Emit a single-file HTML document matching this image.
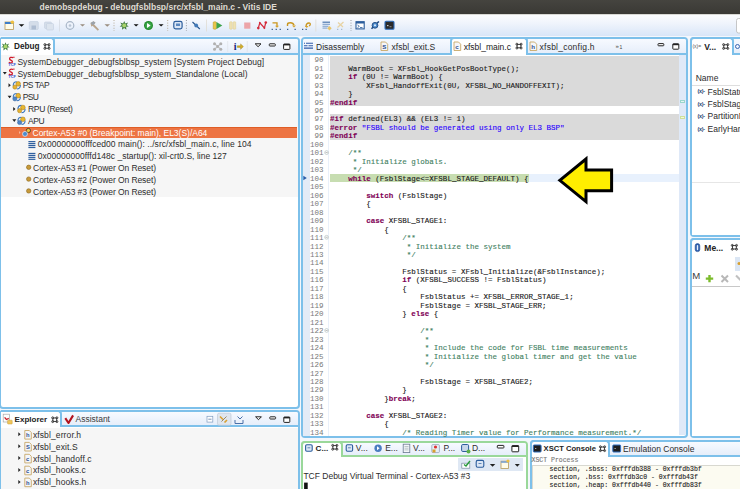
<!DOCTYPE html><html><head><meta charset="utf-8"><style>
*{margin:0;padding:0;box-sizing:border-box}
html,body{width:740px;height:489px;overflow:hidden;background:#f4f7fc;font-family:"Liberation Sans",sans-serif;position:relative}
.a{position:absolute}
#title{left:0;top:0;width:740px;height:13.5px;background:linear-gradient(#45443f,#3a3935);color:#dfdbd2;font-weight:bold;font-size:8.5px;line-height:13px;white-space:nowrap}
#tb{left:0;top:13.5px;width:740px;height:22.5px;background:linear-gradient(#fbfcfe 0%,#f1f5fc 35%,#d9e6f8 100%);border-top:1px solid #d8d8d4}
.t{position:absolute;white-space:nowrap;color:#3c3c3c}
.m{position:absolute;white-space:pre;font-family:"Liberation Mono",monospace;-webkit-text-stroke:0.12px currentColor}
svg{position:absolute;overflow:visible}
</style></head><body>
<div id="title" class="a"><span class="a" style="left:39.5px;top:0.7px">demobspdebug - debugfsblbsp/src/xfsbl_main.c - Vitis IDE</span></div>
<div id="tb" class="a"><svg class="a" style="left:0;top:-1px" width="740" height="24" viewBox="0 13.5 740 24">
<!-- new -->
<rect x="5" y="21.5" width="8.5" height="7.5" fill="#fffbe8" stroke="#b89a58" stroke-width="0.8"/>
<rect x="5" y="21.5" width="8.5" height="2" fill="#3d7cc9"/>
<circle cx="12.3" cy="21.8" r="1.8" fill="#f0c040"/>
<path d="M18.7 23.7h5.6l-2.8 2.6z" fill="#111"/>
<!-- save -->
<rect x="29.3" y="21" width="9" height="8" rx="1" fill="#d4dde9" stroke="#c3cfdf" stroke-width="0.6"/>
<rect x="31.5" y="25" width="4.5" height="4" fill="#aebdd2"/>
<rect x="44.5" y="21.5" width="7" height="6.5" rx="1" fill="#d4dde9" stroke="#c3cfdf" stroke-width="0.6"/>
<rect x="46.5" y="23" width="7" height="6.5" rx="1" fill="#dce4ee" stroke="#c3cfdf" stroke-width="0.6"/>
<line x1="59.5" y1="19" x2="59.5" y2="31" stroke="#d6dbe2" stroke-width="0.8"/>
<!-- history -->
<circle cx="70" cy="25" r="3.8" fill="none" stroke="#a9b7c8" stroke-width="1.2"/>
<circle cx="70" cy="25" r="1.3" fill="#b8c4d3"/>
<path d="M80 23.8h5l-2.5 2.3z" fill="#9a8e80"/>
<!-- hammer -->
<path d="M90.5 22.5l3-1.8 2 1.5-1.5 1.5 5 5.3-1.2 1.2-5.3-5-1.2 1.1z" fill="#b9a58d"/>
<path d="M90.5 22.5l3-1.8 2 1.5-1.5 1.5-1.2 1.1z" fill="#9aa3ad"/>
<path d="M104.5 23.8h5.5l-2.75 2.4z" fill="#9a8e80"/>
<line x1="114" y1="19.5" x2="114" y2="30.5" stroke="#b2a58e" stroke-width="0.9" stroke-dasharray="1 1.6"/>
<!-- debug -->
<g transform="translate(124.2 25)"><path d="M0-4.6L1.1-1.9 3.9-3.1 2.4-0.6 4.6 0.9 1.9 1.2 2.2 4.2 0 2.4-2.2 4.2-1.9 1.2-4.6 0.9-2.4-0.6-3.9-3.1-1.1-1.9z" fill="#3f7a3e"/><circle r="2" fill="#a7d46b"/></g>
<path d="M133.6 23.7h5l-2.5 2.4z" fill="#111"/>
<!-- run -->
<circle cx="148.5" cy="25" r="4.5" fill="#238a2a"/><circle cx="148.5" cy="25" r="3.3" fill="#3aa64a"/>
<path d="M147 22.6l3.6 2.4-3.6 2.4z" fill="#fff"/>
<path d="M158.6 23.7h5l-2.5 2.4z" fill="#111"/>
<line x1="167.7" y1="19.5" x2="167.7" y2="30.5" stroke="#b2a58e" stroke-width="0.9" stroke-dasharray="1 1.6"/>
<!-- blue monitor -->
<rect x="173.8" y="20.9" width="8.3" height="7.5" rx="1.8" fill="#dbe6f5" stroke="#2b5d9c" stroke-width="1.2"/>
<rect x="176" y="23" width="4" height="2.5" fill="#5a87c0"/>
<line x1="186.4" y1="19.5" x2="186.4" y2="30.5" stroke="#8c8f94" stroke-width="0.9" stroke-dasharray="1 1.6"/>
<path d="M192.5 21.5l7.3 7" stroke="#26558e" stroke-width="1.1"/><circle cx="196.2" cy="25" r="1.9" fill="#4179b8"/>
<line x1="206.5" y1="19" x2="206.5" y2="31" stroke="#e0dcd3" stroke-width="0.8"/>
<!-- resume -->
<rect x="213.2" y="21.3" width="3.2" height="7.4" rx="0.8" fill="#e8c64a" stroke="#b99522" stroke-width="0.5"/>
<path d="M216.5 21.5l5.8 3.5-5.8 3.5z" fill="#3ba34b"/>
<!-- suspend -->
<rect x="229.6" y="21.3" width="2.6" height="7.4" rx="0.6" fill="#efe2b3" stroke="#dccb8c" stroke-width="0.5"/>
<rect x="233.1" y="21.3" width="2.6" height="7.4" rx="0.6" fill="#efe2b3" stroke="#dccb8c" stroke-width="0.5"/>
<rect x="244.2" y="22" width="6.2" height="6.2" fill="#eca4a8"/>
<!-- disconnect -->
<path d="M258.3 27.6L259.8 22.3 264.4 27.4 265.8 22" stroke="#d42a3a" stroke-width="1.2" fill="none"/><circle cx="258.3" cy="27.6" r="1.3" fill="#d42a3a"/><circle cx="265.8" cy="22" r="1.3" fill="#d42a3a"/><circle cx="259.8" cy="22.3" r="0.9" fill="#d42a3a"/><circle cx="264.4" cy="27.4" r="0.9" fill="#d42a3a"/>
<!-- step into -->
<path d="M272.5 22.3h4.5v3.5" stroke="#c9951e" stroke-width="1.3" fill="none"/><path d="M275 25.3h4l-2 2z" fill="#d8a32a"/>
<rect x="271.6" y="28.3" width="1.3" height="1.1" fill="#2a4d80"/><rect x="275.6" y="28.3" width="1.3" height="1.1" fill="#2a4d80"/><rect x="279.6" y="28.3" width="1.3" height="1.1" fill="#2a4d80"/>
<!-- step over -->
<path d="M287.5 25.5v-1.5c0-2 5.5-2.8 6.5 0.8" stroke="#c9951e" stroke-width="1.4" fill="none"/><path d="M292 25h4l-2 2z" fill="#d8a32a"/>
<rect x="287" y="28.3" width="1.3" height="1.1" fill="#2a4d80"/><rect x="294.5" y="28.3" width="1.3" height="1.1" fill="#2a4d80"/>
<!-- step return -->
<path d="M306 26.5c0-3 1-4 3-4s1.5 2.5 0 3" stroke="#c9951e" stroke-width="1.3" fill="none"/><path d="M305 25.5h3.5l-1.7 2z" fill="#d8a32a"/>
<rect x="302" y="28.3" width="1.3" height="1.1" fill="#2a4d80"/><rect x="305.5" y="28.3" width="1.3" height="1.1" fill="#2a4d80"/>
<line x1="315.8" y1="19" x2="315.8" y2="31" stroke="#e0dcd3" stroke-width="0.8"/>
<!-- list icon -->
<rect x="322.5" y="21" width="7.5" height="1.6" fill="#6d8fbd"/><rect x="322.5" y="23.3" width="7.5" height="1.2" fill="#8fabd0"/><rect x="322.5" y="25.2" width="6" height="1.2" fill="#8fabd0"/><rect x="322.5" y="27" width="5" height="1.2" fill="#8fabd0"/>
<path d="M329.5 25.5l2.2 2.2-2.2 2.2-2.2-2.2z" fill="#e8c46a"/>
<!-- pale -->
<path d="M337.5 27l6-5.5M338 22l5 4.5" stroke="#e7d3a4" stroke-width="1.3"/><rect x="337" y="28.3" width="1.3" height="1.1" fill="#a4b3c8"/><rect x="341" y="28.3" width="1.3" height="1.1" fill="#a4b3c8"/>
<line x1="351" y1="19.5" x2="351" y2="30.5" stroke="#8c8f94" stroke-width="0.9" stroke-dasharray="1 1.6"/>
<!-- console -->
<rect x="356" y="21.2" width="8.2" height="7.2" fill="#fff" stroke="#2b5d9c" stroke-width="1.1"/><rect x="356" y="21.2" width="8.2" height="1.8" fill="#2b5d9c"/>
<path d="M357.5 24.5l1.8 1.3-1.8 1.3M360 27h2.5" stroke="#2b5d9c" stroke-width="0.8" fill="none"/>
<!-- link -->
<path d="M371.5 28.3l2-2M377 22.6l2-1.6" stroke="#1f4a82" stroke-width="1.6"/><circle cx="375" cy="24.8" r="2.9" fill="#4a88c9" stroke="#1f4a82" stroke-width="0.9"/><circle cx="375" cy="24.8" r="1.1" fill="#dceaf8"/>
<!-- dark terminal -->
<rect x="385" y="20.8" width="9" height="8" rx="1" fill="#2a2a2a" stroke="#2f6fc0" stroke-width="1.1"/>
<rect x="387" y="24.5" width="1.5" height="1.2" fill="#c9c9c9"/><rect x="389.5" y="25.8" width="2" height="0.9" fill="#9a9a9a"/>
<!-- quick access -->
<rect x="736.5" y="18" width="10" height="14.5" rx="2" fill="#fff" stroke="#b9b9b9" stroke-width="0.8"/>
</svg></div>
<div class="a" style="left:-1px;top:37px;width:301.00px;height:372.00px;border:2px solid #7dc0ea;border-radius:4px;background:#fff;overflow:hidden"><div class="a" style="left:0;top:0;right:0;height:16px;background:linear-gradient(#f7faff,#e6eefa);border-bottom:2px solid #7dc0ea"></div></div>
<div class="a" style="left:-1px;top:410px;width:301.00px;height:90.00px;border:2px solid #7dc0ea;border-radius:4px;background:#fff;overflow:hidden"><div class="a" style="left:0;top:0;right:0;height:15px;background:linear-gradient(#f7faff,#e6eefa);border-bottom:2px solid #7dc0ea"></div></div>
<div class="a" style="left:301px;top:37px;width:387.00px;height:401.00px;border:2px solid #7dc0ea;border-radius:4px;background:#fff;overflow:hidden"><div class="a" style="left:0;top:0;right:0;height:16px;background:linear-gradient(#f7faff,#e6eefa);border-bottom:2px solid #7dc0ea"></div></div>
<div class="a" style="left:690px;top:37px;width:70.00px;height:200.00px;border:2px solid #7dc0ea;border-radius:4px;background:#fff;overflow:hidden"><div class="a" style="left:0;top:0;right:0;height:16px;background:linear-gradient(#f7faff,#e6eefa);border-bottom:2px solid #7dc0ea"></div></div>
<div class="a" style="left:690px;top:238px;width:70.00px;height:200.00px;border:2px solid #7dc0ea;border-radius:4px;background:#fff;overflow:hidden"><div class="a" style="left:0;top:0;right:0;height:16px;background:linear-gradient(#f7faff,#e6eefa);border-bottom:2px solid #7dc0ea"></div></div>
<div class="a" style="left:301px;top:441px;width:227.00px;height:59.00px;border:2px solid #9ad89a;border-radius:4px;background:#fff;overflow:hidden"><div class="a" style="left:0;top:0;right:0;height:14px;background:linear-gradient(#f7faff,#e6eefa);border-bottom:2px solid #9ad89a"></div></div>
<div class="a" style="left:530px;top:440px;width:230.00px;height:60.00px;border:2px solid #7dc0ea;border-radius:4px;background:#fff;overflow:hidden"><div class="a" style="left:0;top:0;right:0;height:14.6px;background:linear-gradient(#f7faff,#e6eefa);border-bottom:2px solid #7dc0ea"></div></div>
<div class="a" style="left:1px;top:37px;width:54.00px;height:18.00px;background:#fff;border-right:2px solid #7dc0ea;border-top:2px solid #7dc0ea;border-radius:0 4px 0 0"></div>
<svg style="left:0;top:0" width="740" height="489">
<g transform="translate(5.5 46.5)"><path d="M0-4.3L1-1.8 3.6-2.9 2.2-0.6 4.3 0.8 1.8 1.1 2.1 3.9 0 2.2-2.1 3.9-1.8 1.1-4.3 0.8-2.2-0.6-3.6-2.9-1-1.8z" fill="#3f7a3e"/><circle r="1.9" fill="#a7d46b"/></g>
<g fill="none" stroke="#333" stroke-width="0.9"><rect x="45.10" y="44.80" width="3.8" height="3.4"/><circle cx="44.90" cy="44.60" r="1"/><circle cx="49.10" cy="44.60" r="1"/><circle cx="44.90" cy="48.40" r="1"/><circle cx="49.10" cy="48.40" r="1"/></g>
<path d="M214.5 43.8L220.8 49.2M220.8 43.8L214.5 49.2" stroke="#c4c4c4" stroke-width="1.2"/><g fill="#b0b0b0"><circle cx="214.5" cy="43.8" r="1.5"/><circle cx="220.8" cy="43.8" r="1.5"/><circle cx="217.65" cy="46.5" r="1.4"/><circle cx="214.5" cy="49.2" r="1.5"/><circle cx="220.8" cy="49.2" r="1.5"/></g>
<line x1="227.7" y1="41" x2="227.7" y2="52" stroke="#dfe3e8" stroke-width="0.8"/>
<text x="233.8" y="50.3" font-family="Liberation Serif" font-weight="bold" font-size="10" fill="#16207a">i</text>
<path d="M237.3 45.8h3.3v-1.9l2.8 2.7-2.8 2.7v-1.9h-3.3z" fill="#d4b02a" stroke="#9a7a10" stroke-width="0.4"/>
<line x1="247.3" y1="41" x2="247.3" y2="52" stroke="#dfe3e8" stroke-width="0.8"/>
<path d="M255.2 43.8h5.8l-2.9 2.9z" fill="#fff" stroke="#222" stroke-width="1"/>
<rect x="269.3" y="43.8" width="6" height="2.2" rx="0.6" fill="#fff" stroke="#222" stroke-width="1"/>
<rect x="283.6" y="44" width="6.3" height="5.4" rx="0.6" fill="#fff" stroke="#222" stroke-width="1"/>
<rect x="283.6" y="44" width="6.3" height="1.4" fill="#222"/>
</svg>
<span class="t" style="left:14px;top:42.96px;font-size:8.2px;line-height:8.2px;color:#222;font-weight:bold;">Debug</span>
<div class="a" style="left:1px;top:55px;width:297px;height:142.3px;background:#f6f6f6"></div>
<div class="a" style="left:1px;top:126.8px;width:296px;height:11.2px;background:#ed7443;border-top:0.9px solid #df5d25"></div>
<span class="t" style="left:17.4px;top:57.70px;font-size:8.5px;line-height:8.5px;color:#2c2c2c;letter-spacing:0.046px;">SystemDebugger_debugfsblbsp_system [System Project Debug]</span>
<span class="t" style="left:17.4px;top:69.52px;font-size:8.5px;line-height:8.5px;color:#2c2c2c;letter-spacing:0.029px;">SystemDebugger_debugfsblbsp_system_Standalone (Local)</span>
<span class="t" style="left:22.7px;top:81.34px;font-size:8.5px;line-height:8.5px;color:#2c2c2c;letter-spacing:-0.5px;">PS TAP</span>
<span class="t" style="left:22.7px;top:93.16px;font-size:8.5px;line-height:8.5px;color:#2c2c2c;letter-spacing:-0.6px;">PSU</span>
<span class="t" style="left:28px;top:104.98px;font-size:8.5px;line-height:8.5px;color:#2c2c2c;letter-spacing:-0.33px;">RPU (Reset)</span>
<span class="t" style="left:28px;top:116.80px;font-size:8.5px;line-height:8.5px;color:#2c2c2c;letter-spacing:-0.45px;">APU</span>
<span class="t" style="left:32.5px;top:128.62px;font-size:8.5px;line-height:8.5px;color:#fff;letter-spacing:-0.01px;">Cortex-A53 #0 (Breakpoint: main), EL3(S)/A64</span>
<span class="t" style="left:37.8px;top:140.44px;font-size:8.5px;line-height:8.5px;color:#2c2c2c;letter-spacing:0.06px;">0x00000000fffced00 main(): ../src/xfsbl_main.c, line 104</span>
<span class="t" style="left:37.8px;top:152.26px;font-size:8.5px;line-height:8.5px;color:#2c2c2c;letter-spacing:0.026px;">0x00000000fffd148c _startup(): xil-crt0.S, line 127</span>
<span class="t" style="left:33.1px;top:164.08px;font-size:8.5px;line-height:8.5px;color:#2c2c2c;letter-spacing:-0.077px;">Cortex-A53 #1 (Power On Reset)</span>
<span class="t" style="left:33.1px;top:175.90px;font-size:8.5px;line-height:8.5px;color:#2c2c2c;letter-spacing:-0.077px;">Cortex-A53 #2 (Power On Reset)</span>
<span class="t" style="left:33.1px;top:187.72px;font-size:8.5px;line-height:8.5px;color:#2c2c2c;letter-spacing:-0.077px;">Cortex-A53 #3 (Power On Reset)</span>
<svg style="left:0;top:0" width="740" height="489"><path d="M13.2 57.7c-1.8-0.9-4-0.2-3.6 1.3s3.2 1.4 2.8 2.9-2.3 1.2-3.6 0.4" stroke="#cf1b2b" stroke-width="1.3" fill="none"/><rect x="13.3" y="56.7" width="1.2" height="1.2" fill="#cf1b2b"/><text x="8.3" y="65.7" font-family="Liberation Sans" font-weight="bold" font-size="4.2" textLength="7.6" lengthAdjust="spacingAndGlyphs" fill="#2f4fd0">TCF</text><path d="M2.8 72.02h4l-2 2.6z" fill="#222"/><path d="M13.2 69.52c-1.8-0.9-4-0.2-3.6 1.3s3.2 1.4 2.8 2.9-2.3 1.2-3.6 0.4" stroke="#cf1b2b" stroke-width="1.3" fill="none"/><rect x="13.3" y="68.52" width="1.2" height="1.2" fill="#cf1b2b"/><text x="8.3" y="77.52" font-family="Liberation Sans" font-weight="bold" font-size="4.2" textLength="7.6" lengthAdjust="spacingAndGlyphs" fill="#2f4fd0">TCF</text><path d="M8.5 83.34v4l2.3-2z" fill="#222"/><path d="M13.200000000000001 85.64c0-2.6 1.6-3.9 3.6-3.9M20.4 85.04c0 2.6-1.6 3.9-3.6 3.9" stroke="#3b78c0" stroke-width="1.1" fill="none"/><circle cx="18.200000000000003" cy="83.84" r="2.3" fill="#e8b830" stroke="#a07010" stroke-width="0.5"/><circle cx="14.9" cy="87.04" r="2.1" fill="#e6b432" stroke="#a07010" stroke-width="0.5"/><path d="M7.6 95.66h4l-2 2.6z" fill="#222"/><path d="M13.200000000000001 97.46c0-2.6 1.6-3.9 3.6-3.9M20.4 96.86c0 2.6-1.6 3.9-3.6 3.9" stroke="#3b78c0" stroke-width="1.1" fill="none"/><circle cx="18.200000000000003" cy="95.66" r="2.3" fill="#e8b830" stroke="#a07010" stroke-width="0.5"/><circle cx="14.9" cy="98.86" r="2.1" fill="#4f86c6" stroke="#2a5a98" stroke-width="0.5"/><path d="M13.2 106.97999999999999v4l2.3-2z" fill="#222"/><path d="M17.9 109.27999999999999c0-2.6 1.6-3.9 3.6-3.9M25.1 108.67999999999999c0 2.6-1.6 3.9-3.6 3.9" stroke="#3b78c0" stroke-width="1.1" fill="none"/><circle cx="22.9" cy="107.47999999999999" r="2.3" fill="#e8b830" stroke="#a07010" stroke-width="0.5"/><circle cx="19.6" cy="110.67999999999999" r="2.1" fill="#e6b432" stroke="#a07010" stroke-width="0.5"/><path d="M12.3 119.3h4l-2 2.6z" fill="#222"/><path d="M17.9 121.1c0-2.6 1.6-3.9 3.6-3.9M25.1 120.5c0 2.6-1.6 3.9-3.6 3.9" stroke="#3b78c0" stroke-width="1.1" fill="none"/><circle cx="22.9" cy="119.3" r="2.3" fill="#e8b830" stroke="#a07010" stroke-width="0.5"/><circle cx="19.6" cy="122.5" r="2.1" fill="#4f86c6" stroke="#2a5a98" stroke-width="0.5"/><path d="M19 131.12v3l1.6-1.5z" fill="#f6b59a"/><circle cx="28.4" cy="130.52" r="2.1" fill="#f0c840" stroke="#3a3020" stroke-width="0.8"/><circle cx="25.0" cy="133.92000000000002" r="2.5" fill="#4d8ccc" stroke="#fff" stroke-width="0.6"/><rect x="28.4" y="141.04" width="7" height="1.2" fill="#2f5f9f"/><rect x="28.4" y="142.99" width="7" height="1.2" fill="#2f5f9f"/><rect x="28.4" y="144.94" width="7" height="1.2" fill="#2f5f9f"/><rect x="28.4" y="146.89" width="7" height="1.2" fill="#2f5f9f"/><rect x="28.4" y="152.86" width="7" height="1.2" fill="#2f5f9f"/><rect x="28.4" y="154.81" width="7" height="1.2" fill="#2f5f9f"/><rect x="28.4" y="156.76" width="7" height="1.2" fill="#2f5f9f"/><rect x="28.4" y="158.71" width="7" height="1.2" fill="#2f5f9f"/><circle cx="28.7" cy="167.27999999999997" r="2.2" fill="#c79a3a" stroke="#8a6418" stroke-width="0.6"/><circle cx="28.7" cy="179.1" r="2.2" fill="#c79a3a" stroke="#8a6418" stroke-width="0.6"/><circle cx="28.7" cy="190.92" r="2.2" fill="#c79a3a" stroke="#8a6418" stroke-width="0.6"/></svg>
<div class="a" style="left:1px;top:427.5px;width:297px;height:62px;background:#f6f6f6"></div>
<div class="a" style="left:1px;top:410px;width:61.00px;height:17.00px;background:#fff;border-right:2px solid #7dc0ea;border-top:2px solid #7dc0ea;border-radius:0 4px 0 0"></div>
<svg style="left:0;top:0" width="740" height="489"><rect x="3.2" y="414.2" width="6.2" height="7.8" fill="#fff" stroke="#a8a8a8" stroke-width="0.7"/><path d="M4.6 417.3l1.8 2.2 2.4-1.2" stroke="#c8202a" stroke-width="1.3" fill="none"/><rect x="7.6" y="420.2" width="4.6" height="3.8" rx="0.6" fill="#f2c75a" stroke="#c49a38" stroke-width="0.5"/><g fill="none" stroke="#333" stroke-width="0.9"><rect x="52.90" y="418.00" width="3.8" height="3.4"/><circle cx="52.70" cy="417.80" r="1"/><circle cx="56.90" cy="417.80" r="1"/><circle cx="52.70" cy="421.60" r="1"/><circle cx="56.90" cy="421.60" r="1"/></g><path d="M65.3 418.2l3.2 4.8 4.6-7.6" stroke="#b3141f" stroke-width="2.1" fill="none" stroke-linejoin="round"/><rect x="207" y="416.3" width="5.8" height="5.8" fill="#fff" stroke="#7f9cc0" stroke-width="0.7"/><path d="M208.3 419.2h3.2" stroke="#5a7aa8" stroke-width="0.8"/><rect x="217.5" y="413.2" width="13.5" height="12" rx="1.5" fill="#dfe6ef" stroke="#b9c4d2" stroke-width="0.6"/><path d="M220 416.5l3 3M227 420l-2.5 2.5" stroke="#d8a030" stroke-width="1.6"/><path d="M221.5 421.5l5-5" stroke="#8a7040" stroke-width="0.8"/><path d="M235 420v3.5h8v-3.5" stroke="#4a70a8" stroke-width="1" fill="none"/><path d="M237.5 416.5l2.5 2.5 2.5-2.5" stroke="#4a70a8" stroke-width="1" fill="none"/><path d="M255.6 416.8h5.8l-2.9 2.9z" fill="#fff" stroke="#222" stroke-width="1"/><rect x="269.8" y="416.8" width="5.8" height="2.2" rx="0.6" fill="#fff" stroke="#222" stroke-width="1"/><rect x="283.8" y="417" width="6" height="5.4" rx="0.6" fill="#fff" stroke="#222" stroke-width="1"/><rect x="283.8" y="417" width="6" height="1.4" fill="#222"/></svg>
<span class="t" style="left:14.6px;top:415.73px;font-size:8px;line-height:8px;color:#222;font-weight:bold;">Explorer</span>
<span class="t" style="left:75.5px;top:415.30px;font-size:8.5px;line-height:8.5px;color:#3c3c3c;">Assistant</span>
<span class="t" style="left:32.9px;top:430.70px;font-size:8.5px;line-height:8.5px;color:#2c2c2c;letter-spacing:0.12px;">xfsbl_error.h</span>
<span class="t" style="left:32.9px;top:442.60px;font-size:8.5px;line-height:8.5px;color:#2c2c2c;letter-spacing:0.12px;">xfsbl_exit.S</span>
<span class="t" style="left:32.9px;top:454.50px;font-size:8.5px;line-height:8.5px;color:#2c2c2c;letter-spacing:0.12px;">xfsbl_handoff.c</span>
<span class="t" style="left:32.9px;top:466.40px;font-size:8.5px;line-height:8.5px;color:#2c2c2c;letter-spacing:0.12px;">xfsbl_hooks.c</span>
<span class="t" style="left:32.9px;top:478.30px;font-size:8.5px;line-height:8.5px;color:#2c2c2c;letter-spacing:0.12px;">xfsbl_hooks.h</span>
<svg style="left:0;top:0" width="740" height="489"><path d="M18.3 432.3v4l2.3-2z" fill="#222"/><path d="M24.8 430.5h4.5l2 2v6.6h-6.5z" fill="#f4f6fa" stroke="#c8a868" stroke-width="0.9"/><text x="25.9" y="436.90000000000003" font-size="5.8" font-family="Liberation Sans" font-weight="bold" fill="#2a4f8f">h</text><path d="M18.3 444.2v4l2.3-2z" fill="#222"/><path d="M24.8 442.4h4.5l2 2v6.6h-6.5z" fill="#f4f6fa" stroke="#c8a868" stroke-width="0.9"/><text x="25.9" y="448.8" font-size="5.8" font-family="Liberation Sans" font-weight="bold" fill="#2a4f8f">S</text><path d="M18.3 456.1v4l2.3-2z" fill="#222"/><path d="M24.8 454.3h4.5l2 2v6.6h-6.5z" fill="#f4f6fa" stroke="#c8a868" stroke-width="0.9"/><text x="25.9" y="460.70000000000005" font-size="5.8" font-family="Liberation Sans" font-weight="bold" fill="#2a4f8f">c</text><path d="M18.3 468.0v4l2.3-2z" fill="#222"/><path d="M24.8 466.2h4.5l2 2v6.6h-6.5z" fill="#f4f6fa" stroke="#c8a868" stroke-width="0.9"/><text x="25.9" y="472.6" font-size="5.8" font-family="Liberation Sans" font-weight="bold" fill="#2a4f8f">c</text><path d="M18.3 479.90000000000003v4l2.3-2z" fill="#222"/><path d="M24.8 478.1h4.5l2 2v6.6h-6.5z" fill="#f4f6fa" stroke="#c8a868" stroke-width="0.9"/><text x="25.9" y="484.50000000000006" font-size="5.8" font-family="Liberation Sans" font-weight="bold" fill="#2a4f8f">h</text></svg>
<div class="a" style="left:450px;top:37px;width:78.00px;height:18.00px;background:#fff;border-left:2px solid #7dc0ea;border-right:2px solid #7dc0ea;border-top:2px solid #7dc0ea;border-radius:4px 4px 0 0"></div>
<div class="a" style="left:303px;top:55px;width:7.2px;height:381px;background:#e3ebf7"></div>
<div class="a" style="left:328.2px;top:54.8px;width:1px;height:381.6px;background:#e9f0fa"></div>
<div class="a" style="left:678.6px;top:55px;width:7.4px;height:379.6px;background:#dfe9f8"></div>
<div class="a" style="left:330px;top:55.9px;width:348.6px;height:50.12px;background:#dadada"></div>
<div class="a" style="left:330.0px;top:114.49px;width:348.60px;height:25.41px;background:#dadada"></div>
<div class="a" style="left:330.0px;top:173.78px;width:348.60px;height:8.47px;background:#e8f1fd"></div>
<div class="a" style="left:330.0px;top:173.78px;width:199.20px;height:8.47px;background:#c7ddb1"></div>
<div class="m" style="left:330.1px;top:56.20px;font-size:7.53px;line-height:8.47px;color:#1a1a1a">
<span style="color:#1a1a1a;">    WarmBoot = XFsbl_HookGetPosBootType();</span>
<span style="color:#1a1a1a;">    </span><span style="color:#7f0055;font-weight:bold;">if</span><span style="color:#1a1a1a;"> (0U != WarmBoot) {</span>
<span style="color:#1a1a1a;">        XFsbl_HandoffExit(0U, XFSBL_NO_HANDOFFEXIT);</span>
<span style="color:#1a1a1a;">    }</span>
<span style="color:#7f0055;font-weight:bold;">#endif</span>

<span style="color:#7f0055;font-weight:bold;">#if</span><span style="color:#1a1a1a;"> defined(EL3) &amp;&amp; (EL3 != 1)</span>
<span style="color:#7f0055;font-weight:bold;">#error</span><span style="color:#1a1a1a;"> </span><span style="color:#2a00ff;">&quot;FSBL should be generated using only EL3 BSP&quot;</span>
<span style="color:#7f0055;font-weight:bold;">#endif</span>

<span style="color:#3f7f5f;">    /**</span>
<span style="color:#3f7f5f;">     * Initialize globals.</span>
<span style="color:#3f7f5f;">     */</span>
<span style="color:#1a1a1a;">    </span><span style="color:#7f0055;font-weight:bold;">while</span><span style="color:#1a1a1a;"> (FsblStage&lt;=XFSBL_STAGE_DEFAULT) {</span>

<span style="color:#1a1a1a;">        </span><span style="color:#7f0055;font-weight:bold;">switch</span><span style="color:#1a1a1a;"> (FsblStage)</span>
<span style="color:#1a1a1a;">        {</span>

<span style="color:#1a1a1a;">        </span><span style="color:#7f0055;font-weight:bold;">case</span><span style="color:#1a1a1a;"> XFSBL_STAGE1:</span>
<span style="color:#1a1a1a;">            {</span>
<span style="color:#3f7f5f;">                /**</span>
<span style="color:#3f7f5f;">                 * Initialize the system</span>
<span style="color:#3f7f5f;">                 */</span>

<span style="color:#1a1a1a;">                FsblStatus = XFsbl_Initialize(&amp;FsblInstance);</span>
<span style="color:#1a1a1a;">                </span><span style="color:#7f0055;font-weight:bold;">if</span><span style="color:#1a1a1a;"> (XFSBL_SUCCESS != FsblStatus)</span>
<span style="color:#1a1a1a;">                {</span>
<span style="color:#1a1a1a;">                    FsblStatus += XFSBL_ERROR_STAGE_1;</span>
<span style="color:#1a1a1a;">                    FsblStage = XFSBL_STAGE_ERR;</span>
<span style="color:#1a1a1a;">                } </span><span style="color:#7f0055;font-weight:bold;">else</span><span style="color:#1a1a1a;"> {</span>

<span style="color:#3f7f5f;">                    /**</span>
<span style="color:#3f7f5f;">                     *</span>
<span style="color:#3f7f5f;">                     * Include the code for FSBL time measurements</span>
<span style="color:#3f7f5f;">                     * Initialize the global timer and get the value</span>
<span style="color:#3f7f5f;">                     */</span>

<span style="color:#1a1a1a;">                    FsblStage = XFSBL_STAGE2;</span>
<span style="color:#1a1a1a;">                }</span>
<span style="color:#1a1a1a;">            }</span><span style="color:#7f0055;font-weight:bold;">break</span><span style="color:#1a1a1a;">;</span>

<span style="color:#1a1a1a;">        </span><span style="color:#7f0055;font-weight:bold;">case</span><span style="color:#1a1a1a;"> XFSBL_STAGE2:</span>
<span style="color:#1a1a1a;">            {</span>
<span style="color:#3f7f5f;">                /* Reading Timer value for Performance measurement.*/</span></div>
<div class="m" style="left:307.6px;top:56.20px;width:16px;text-align:right;-webkit-text-stroke:0;font-size:7.53px;line-height:8.47px;color:#787878">90
91
92
93
94
95
96
97
98
99
100
101
102
103
104
105
106
107
108
109
110
111
112
113
114
115
116
117
118
119
120
121
122
123
124
125
126
127
128
129
130
131
132
133
134</div>
<div class="a" style="left:679.8px;top:100px;width:5px;height:2.6px;background:#e4f6f3;border:0.7px solid #9ad6cc"></div>
<div class="a" style="left:679.8px;top:116.3px;width:5px;height:2.6px;background:#f2f8dc;border:0.7px solid #cfe09a"></div>
<svg style="left:0;top:0" width="740" height="489"><circle cx="326.6" cy="152.57" r="1.9" fill="#fff" stroke="#9aa" stroke-width="0.5"/><path d="M325.5 152.57h2.2" stroke="#777" stroke-width="0.5"/><circle cx="326.6" cy="237.27" r="1.9" fill="#fff" stroke="#9aa" stroke-width="0.5"/><path d="M325.5 237.27h2.2" stroke="#777" stroke-width="0.5"/><circle cx="326.6" cy="330.44" r="1.9" fill="#fff" stroke="#9aa" stroke-width="0.5"/><path d="M325.5 330.44h2.2" stroke="#777" stroke-width="0.5"/><path d="M303.3 175.78l3.5 2.2-3.5 2.2z" fill="#2a5ca8"/></svg>
<svg style="left:0;top:0" width="740" height="489"><path d="M306 43.3h7M304 43.3h1M304 45.7h3.5M308.5 45.7h4.5M304 48.1h9" stroke="#2f5aa8" stroke-width="1.1"/><path d="M381 42h4.5l2.2 2.2v6.3h-6.7z" fill="#f5f6fa" stroke="#c8a868" stroke-width="0.9"/><path d="M454 42h4.5l2.2 2.2v6.3h-6.7z" fill="#f5f6fa" stroke="#c8a868" stroke-width="0.9"/><path d="M530 42h4.5l2.2 2.2v6.3h-6.7z" fill="#f5f6fa" stroke="#c8a868" stroke-width="0.9"/><g fill="none" stroke="#333" stroke-width="0.9"><rect x="517.10" y="44.40" width="3.8" height="3.4"/><circle cx="516.90" cy="44.20" r="1"/><circle cx="521.10" cy="44.20" r="1"/><circle cx="516.90" cy="48.00" r="1"/><circle cx="521.10" cy="48.00" r="1"/></g><rect x="658" y="43.6" width="5.8" height="2.2" rx="0.6" fill="#fff" stroke="#222" stroke-width="1"/><rect x="672.8" y="43.8" width="6" height="5.4" rx="0.6" fill="#fff" stroke="#222" stroke-width="1"/><rect x="672.8" y="43.8" width="6" height="1.4" fill="#222"/></svg>
<span class="t" style="left:382.2px;top:44.05px;font-size:6.2px;line-height:6.2px;color:#2a4f8f;font-weight:bold;">S</span>
<span class="t" style="left:455.2px;top:44.05px;font-size:6.2px;line-height:6.2px;color:#2a4f8f;font-weight:bold;">c</span>
<span class="t" style="left:531.2px;top:44.05px;font-size:6.2px;line-height:6.2px;color:#2a4f8f;font-weight:bold;">h</span>
<span class="t" style="left:316px;top:42.50px;font-size:8.5px;line-height:8.5px;color:#2c2c2c;">Disassembly</span>
<span class="t" style="left:391.6px;top:42.50px;font-size:8.5px;line-height:8.5px;color:#2c2c2c;">xfsbl_exit.S</span>
<span class="t" style="left:463.7px;top:42.50px;font-size:8.5px;line-height:8.5px;color:#222;">xfsbl_main.c</span>
<span class="t" style="left:539.6px;top:42.50px;font-size:8.5px;line-height:8.5px;color:#2c2c2c;letter-spacing:0.23px;">xfsbl_config.h</span>
<span class="t" style="left:615.5px;top:42.92px;font-size:6px;line-height:6px;color:#444;">»</span>
<span class="t" style="left:619.5px;top:45.27px;font-size:5px;line-height:5px;color:#444;">1</span>
<div class="a" style="left:690px;top:37px;width:44.00px;height:18.00px;background:#fff;border-left:2px solid #7dc0ea;border-right:2px solid #7dc0ea;border-top:2px solid #7dc0ea;border-radius:4px 4px 0 0"></div>
<div class="a" style="left:692px;top:55px;width:50px;height:180px;background:#fff"></div>
<div class="a" style="left:692px;top:84.8px;width:50px;height:0.9px;background:#dedede"></div>
<div class="a" style="left:692px;top:181.8px;width:50px;height:1px;background:#e6e6e6"></div>
<svg style="left:0;top:0" width="740" height="489"><g fill="none" stroke="#333" stroke-width="0.9"><rect x="723.80" y="44.80" width="3.8" height="3.4"/><circle cx="723.60" cy="44.60" r="1"/><circle cx="727.80" cy="44.60" r="1"/><circle cx="723.60" cy="48.40" r="1"/><circle cx="727.80" cy="48.40" r="1"/></g><circle cx="737.5" cy="46.5" r="2" fill="none" stroke="#3b66b0" stroke-width="1"/></svg>
<span class="t" style="left:692.4px;top:44.37px;font-size:5px;line-height:5px;color:#555;">(x)=</span>
<span class="t" style="left:704.2px;top:42.80px;font-size:8.5px;line-height:8.5px;color:#222;font-weight:bold;">V...</span>
<span class="t" style="left:695.7px;top:73.60px;font-size:8.5px;line-height:8.5px;color:#2c2c2c;">Name</span>
<span class="t" style="left:697.6px;top:89.23px;font-size:5.4px;line-height:5.4px;color:#253f70;font-weight:bold;letter-spacing:-0.35px;">(x)-</span>
<span class="t" style="left:707.6px;top:87.50px;font-size:8.5px;line-height:8.5px;color:#2c2c2c;">FsblStatus</span>
<span class="t" style="left:697.6px;top:101.68px;font-size:5.4px;line-height:5.4px;color:#253f70;font-weight:bold;letter-spacing:-0.35px;">(x)-</span>
<span class="t" style="left:707.6px;top:99.95px;font-size:8.5px;line-height:8.5px;color:#2c2c2c;">FsblStage</span>
<span class="t" style="left:697.6px;top:114.13px;font-size:5.4px;line-height:5.4px;color:#253f70;font-weight:bold;letter-spacing:-0.35px;">(x)-</span>
<span class="t" style="left:707.6px;top:112.40px;font-size:8.5px;line-height:8.5px;color:#2c2c2c;">PartitionNum</span>
<span class="t" style="left:697.6px;top:126.58px;font-size:5.4px;line-height:5.4px;color:#253f70;font-weight:bold;letter-spacing:-0.35px;">(x)-</span>
<span class="t" style="left:707.6px;top:124.85px;font-size:8.5px;line-height:8.5px;color:#2c2c2c;">EarlyHandoff</span>
<div class="a" style="left:690px;top:238px;width:55.00px;height:18.00px;background:#fff;border-left:2px solid #7dc0ea;border-right:2px solid #7dc0ea;border-top:2px solid #7dc0ea;border-radius:4px 4px 0 0"></div>
<div class="a" style="left:692px;top:256px;width:50px;height:180px;background:#fff"></div>
<div class="a" style="left:735px;top:256.5px;width:6px;height:14px;background:#dbe6f4"></div>
<div class="a" style="left:692px;top:286.2px;width:50px;height:0.9px;background:#c8c8c8"></div>
<svg style="left:0;top:0" width="740" height="489"><rect x="695.2" y="243.6" width="4.6" height="8" rx="2.2" fill="#2e5fae" stroke="#1e4a90" stroke-width="0.6"/><rect x="696.8" y="245" width="1.4" height="5.2" rx="0.7" fill="#e8f0fb"/><g fill="none" stroke="#333" stroke-width="0.9"><rect x="732.50" y="245.60" width="3.8" height="3.4"/><circle cx="732.30" cy="245.40" r="1"/><circle cx="736.50" cy="245.40" r="1"/><circle cx="732.30" cy="249.20" r="1"/><circle cx="736.50" cy="249.20" r="1"/></g><path d="M709.5 275v7.2M705.8 278.6h7.4" stroke="#7cbc2c" stroke-width="2.4"/><path d="M721.5 275.5l6.5 6.5M728 275.5l-6.5 6.5" stroke="#b8b8b8" stroke-width="2"/><path d="M736 275.5l5 5" stroke="#c0c0c0" stroke-width="2"/><circle cx="739" cy="263.5" r="1.5" fill="#d8a030"/></svg>
<span class="t" style="left:704.3px;top:243.50px;font-size:8.5px;line-height:8.5px;color:#222;font-weight:bold;">Me...</span>
<span class="t" style="left:692.2px;top:271.47px;font-size:9.6px;line-height:9.6px;color:#3c3c3c;">M</span>
<div class="a" style="left:301px;top:441px;width:42.00px;height:16.00px;background:#fff;border-left:2px solid #9ad89a;border-right:2px solid #9ad89a;border-top:2px solid #9ad89a;border-radius:4px 4px 0 0"></div>
<div class="a" style="left:303px;top:457px;width:223px;height:40px;background:#fff"></div>
<div class="a" style="left:457.6px;top:457.9px;width:65.4px;height:13.5px;background:#dfe8f4"></div>
<svg style="left:0;top:0" width="740" height="489"><rect x="305.6" y="444.8" width="6.6" height="6.4" rx="1.2" fill="#dbe6f5" stroke="#2b5d9c" stroke-width="1.1"/><path d="M307.5 447.8h2.8" stroke="#2b5d9c" stroke-width="0.7"/><g fill="none" stroke="#333" stroke-width="0.9"><rect x="332.90" y="445.60" width="3.8" height="3.4"/><circle cx="332.70" cy="445.40" r="1"/><circle cx="336.90" cy="445.40" r="1"/><circle cx="332.70" cy="449.20" r="1"/><circle cx="336.90" cy="449.20" r="1"/></g><rect x="346.2" y="444.8" width="6.4" height="6.4" rx="1.2" fill="#dbe6f5" stroke="#2b5d9c" stroke-width="1.1"/><path d="M348 447.8h2.8" stroke="#2b5d9c" stroke-width="0.7"/><circle cx="378.1" cy="448.2" r="3.7" fill="#4a7cc0"/><path d="M377 446.2l2.6 2-2.6 2z" fill="#fff"/><rect x="403.2" y="444.2" width="6.6" height="8.4" fill="#f4f6fa" stroke="#6a7a90" stroke-width="0.8"/><path d="M404.5 446.5h4M404.5 448.2h4M404.5 449.9h4" stroke="#9aa" stroke-width="0.6"/><rect x="431.8" y="444.6" width="7.6" height="8" rx="1" fill="#e8eef5" stroke="#8a9ab0" stroke-width="0.7"/><circle cx="435.5" cy="447" r="1.6" fill="#e03030"/><rect x="432.5" y="449.5" width="3" height="3" fill="#d8a030"/><rect x="461.6" y="444.5" width="7" height="7" rx="1.2" fill="#c8d6ea" stroke="#2b5d9c" stroke-width="1"/><circle cx="468.5" cy="451.5" r="2" fill="#5ab04a"/><rect x="497.3" y="445.4" width="6.6" height="2.6" rx="0.6" fill="#fff" stroke="#222" stroke-width="1"/><rect x="511.9" y="445.6" width="6.8" height="6.2" rx="0.6" fill="#fff" stroke="#222" stroke-width="1"/><rect x="511.9" y="445.6" width="6.8" height="1.4" fill="#222"/><rect x="461.8" y="463.2" width="8" height="5" fill="#fff" stroke="#7a8aa0" stroke-width="0.7"/><path d="M464 464.5l2 1.5 4-5" stroke="#2a9a3a" stroke-width="1.4" fill="none"/><rect x="476.2" y="460.4" width="7.6" height="6.8" rx="1.5" fill="#dbe6f5" stroke="#2b5d9c" stroke-width="1.1"/><path d="M478.5 463.5h3" stroke="#2b5d9c" stroke-width="0.7"/><path d="M489.8 464h5.5l-2.75 2.8z" fill="#222"/><rect x="501" y="461.2" width="7.5" height="7.2" fill="#fffbe8" stroke="#b89a58" stroke-width="0.8"/><rect x="501" y="461.2" width="7.5" height="1.6" fill="#7aa0d0"/><circle cx="508" cy="461" r="1.6" fill="#f0c040"/><path d="M514.8 464h5l-2.5 2.8z" fill="#222"/><rect x="304.1" y="482.6" width="3.6" height="7" fill="#111"/></svg>
<span class="t" style="left:315.6px;top:444.74px;font-size:8.1px;line-height:8.1px;color:#222;font-weight:bold;">C...</span>
<span class="t" style="left:355.8px;top:444.40px;font-size:8.5px;line-height:8.5px;color:#2c2c2c;">V...</span>
<span class="t" style="left:385.2px;top:444.40px;font-size:8.5px;line-height:8.5px;color:#2c2c2c;">E...</span>
<span class="t" style="left:413px;top:444.40px;font-size:8.5px;line-height:8.5px;color:#2c2c2c;">V...</span>
<span class="t" style="left:443.5px;top:444.40px;font-size:8.5px;line-height:8.5px;color:#2c2c2c;">P...</span>
<span class="t" style="left:471.9px;top:444.40px;font-size:8.5px;line-height:8.5px;color:#2c2c2c;">D...</span>
<span class="t" style="left:303.4px;top:472.40px;font-size:8.5px;line-height:8.5px;color:#2c2c2c;">TCF Debug Virtual Terminal - Cortex-A53 #3</span>
<div class="a" style="left:530px;top:440px;width:80.00px;height:16.60px;background:#fff;border-left:2px solid #7dc0ea;border-right:2px solid #7dc0ea;border-top:2px solid #7dc0ea;border-radius:4px 4px 0 0"></div>
<div class="a" style="left:532px;top:456.6px;width:210px;height:40px;background:#fff"></div>
<div class="a" style="left:532px;top:465.2px;width:210px;height:30px;background:#fcfbf1;border-top:0.8px solid #d8d8d0;border-left:0.8px solid #d8d8d0"></div>
<svg style="left:0;top:0" width="740" height="489"><rect x="533.3" y="445" width="7.8" height="7" rx="0.8" fill="#1e1e1e" stroke="#2f6fc0" stroke-width="1"/><rect x="535" y="448" width="1.3" height="1" fill="#aaa"/><g fill="none" stroke="#333" stroke-width="0.9"><rect x="600.60" y="447.00" width="3.8" height="3.4"/><circle cx="600.40" cy="446.80" r="1"/><circle cx="604.60" cy="446.80" r="1"/><circle cx="600.40" cy="450.60" r="1"/><circle cx="604.60" cy="450.60" r="1"/></g><rect x="612.8" y="445" width="7.8" height="7" rx="0.8" fill="#1e1e1e" stroke="#2f6fc0" stroke-width="1"/><rect x="614.5" y="448" width="1.3" height="1" fill="#aaa"/></svg>
<span class="t" style="left:543.6px;top:445.27px;font-size:7.6px;line-height:7.6px;color:#222;font-weight:bold;">XSCT Console</span>
<span class="t" style="left:623.1px;top:444.50px;font-size:8.5px;line-height:8.5px;color:#2c2c2c;">Emulation Console</span>
<span class="m" style="left:531.5px;top:457.82px;font-size:6.5px;line-height:6.5px;color:#777;">XSCT Process</span>
<span class="m" style="left:534px;top:466.92px;font-size:6.5px;line-height:6.5px;color:#222;">    section, .sbss: 0xfffdb388 - 0xfffdb3bf</span>
<span class="m" style="left:534px;top:474.72px;font-size:6.5px;line-height:6.5px;color:#222;">    section, .bss: 0xfffdb3c0 - 0xfffdb43f</span>
<span class="m" style="left:534px;top:482.52px;font-size:6.5px;line-height:6.5px;color:#222;">    section, .heap: 0xfffdb440 - 0xfffdb83f</span>
<svg style="left:0;top:0" width="740" height="489"><path d="M559.8 180.3L586 159V169.9H611.6V190.8H586V201.6z" fill="#ffee00" stroke="#000" stroke-width="3" stroke-linejoin="miter"/></svg>
</body></html>
